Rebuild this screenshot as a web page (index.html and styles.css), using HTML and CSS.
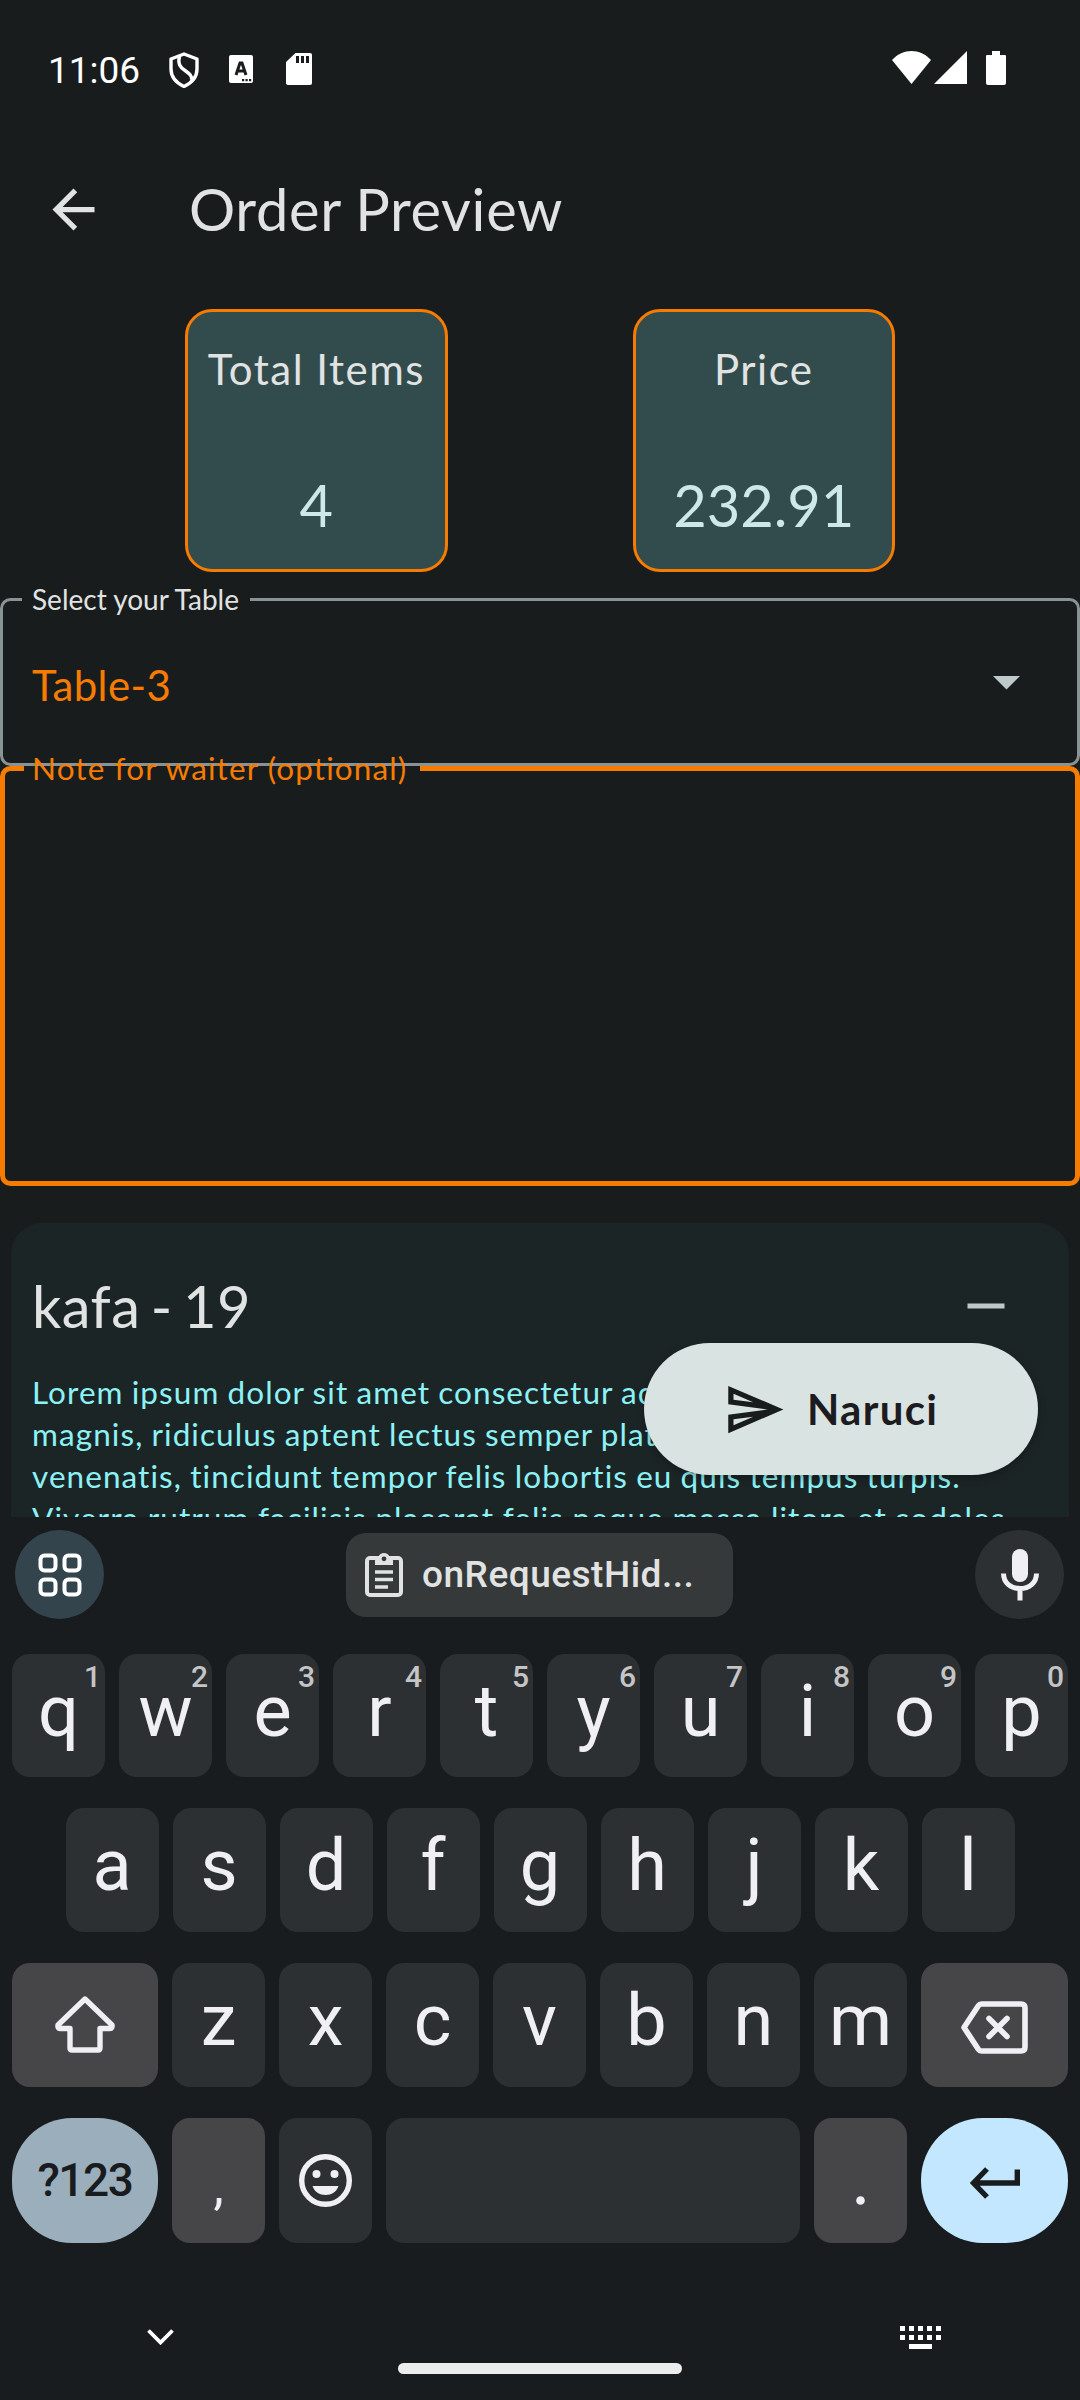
FILE: index.html
```html
<!DOCTYPE html>
<html lang="en">
<head>
<meta charset="utf-8">
<title>Order Preview</title>
<link rel="stylesheet" href="styles.css">
</head>
<body>
<div class="screen">
  <main class="app">
    <header class="status">
      <span class="clock">11:06</span>
      <svg class="ic-shield" width="30" height="36" viewBox="0 0 30 36" fill="none" stroke="#fff" stroke-width="3.4" stroke-linejoin="round"><path d="M15 2 L28 7 V17 C28 25 22.500 31 15 34.500 C7.500 31 2 25 2 17 V7 Z"/><path d="M10.500 4 C8.500 12 11 15 16 18.500 C20.500 21.700 23.500 24 22.500 28"/></svg>
      <svg class="ic-a" width="24" height="28" viewBox="0 0 24 28"><rect width="24" height="28" rx="2" fill="#fff"/><path d="M7 20 L11 8 H13 L17 20 M8.500 16 H15.500" fill="none" stroke="#191c1d" stroke-width="3"/><path d="M13 24h2.200v2.200H13zM16.500 24h2.200v2.200h-2.200zM20 24h2.200v2.200H20z" fill="#191c1d"/></svg>
      <svg class="ic-sd" width="26" height="32" viewBox="0 0 26 32"><path d="M9.500 0H24a2 2 0 0 1 2 2v28a2 2 0 0 1-2 2H2a2 2 0 0 1-2-2V9z" fill="#fff"/><path d="M10 3h3v7h-3zM15 3h3v7h-3zM20 3h3v7h-3z" fill="#191c1d"/></svg>
      <span class="spacer"></span>
      <svg class="ic-wifi" width="39" height="33" viewBox="0 0 39 33"><path d="M19.500 33 L0 9 C11 -3 28 -3 39 9 Z" fill="#fff"/></svg>
      <svg class="ic-cell" width="33" height="33" viewBox="0 0 33 33"><path d="M33 0V33H0z" fill="#fff"/></svg>
      <svg class="ic-batt" width="20" height="34" viewBox="0 0 20 34"><path d="M6 0h8v4h5a1 1 0 0 1 1 1v27a2 2 0 0 1-2 2H2a2 2 0 0 1-2-2V5a1 1 0 0 1 1-1h5z" fill="#fff"/></svg>
    </header>

    <div class="appbar">
      <svg width="63" height="63" viewBox="0 0 24 24"><path d="M20 11H7.830l5.590-5.590L12 4l-8 8 8 8 1.410-1.410L7.830 13H20z" fill="#e1e3e3"/></svg>
      <h1 class="title">Order Preview</h1>
    </div>

    <section class="stats">
      <div class="stat"><span class="stat-name">Total Items</span><span class="stat-value">4</span></div>
      <div class="stat"><span class="stat-name">Price</span><span class="stat-value">232.91</span></div>
    </section>

    <fieldset class="field select">
      <legend>Select your Table</legend>
      <span class="select-value">Table-3</span>
      <svg width="27" height="14" viewBox="0 0 27 14"><path d="M0 0H27L13.500 13.500z" fill="#bec9c9"/></svg>
    </fieldset>
    <fieldset class="field note"><legend>Note for waiter (optional)</legend></fieldset>

    <article class="item">
      <div class="item-head">
        <h2 class="item-title">kafa - 19</h2>
        <svg width="38" height="6" viewBox="0 0 38 6"><path d="M0.500 0.500H37.500V5.500H0.500z" fill="#bec9c9"/></svg>
      </div>
      <p class="item-text">Lorem ipsum dolor sit amet consectetur adipiscing elit<br>magnis, ridiculus aptent lectus semper platea<br>venenatis, tincidunt tempor felis lobortis eu quis tempus turpis.<br><span class="loose">Viverra rutrum facilisis placerat felis neque massa litora et sodales</span></p>
    </article>

    <div class="fab">
      <svg width="63" height="63" viewBox="0 0 24 24"><path d="M2.010 3L2 10l15 2-15 2 .010 7L23 12zM4 6.030l7.510 3.220L4 8.250zM11.500 14.750L4 17.970v-2.220z" fill="#191c1d" fill-rule="evenodd"/></svg>
      <span>Naruci</span>
    </div>
  </main>

  <section class="keyboard">
    <div class="strip">
      <div class="round apps"><svg width="44" height="44" viewBox="0 0 44 44" fill="none" stroke="#fff" stroke-width="4"><rect x="2.500" y="2.500" width="15" height="15" rx="4"/><rect x="26.500" y="2.500" width="15" height="15" rx="4"/><rect x="2.500" y="26.500" width="15" height="15" rx="4"/><rect x="26.500" y="26.500" width="15" height="15" rx="4"/></svg></div>
      <div class="chip">
        <svg width="38" height="45" viewBox="0 0 38 45"><rect x="2" y="6" width="34" height="37" rx="3" fill="none" stroke="#e1e3e3" stroke-width="4"/><path d="M10 4.500H13.500A6 6 0 0 1 24.500 4.500H28V13H10z" fill="#e1e3e3"/><circle cx="19" cy="6.800" r="2.400" fill="#363939"/><path d="M10 20H28M10 27.500H28M10 35H23" stroke="#e1e3e3" stroke-width="3.600"/></svg>
        <span>onRequestHid...</span>
      </div>
      <div class="round"><svg width="38" height="52" viewBox="0 0 38 52"><rect x="11" y="0" width="16" height="33" rx="8" fill="#f0eff3"/><path d="M2.500 24.500C2.500 34 10 39.500 19 39.500S35.500 34 35.500 24.500M19 39.500V51.500" fill="none" stroke="#f0eff3" stroke-width="5"/></svg></div>
    </div>

    <div class="row row-top">
      <div class="key">q<sup>1</sup></div><div class="key">w<sup>2</sup></div><div class="key">e<sup>3</sup></div><div class="key">r<sup>4</sup></div><div class="key">t<sup>5</sup></div><div class="key">y<sup>6</sup></div><div class="key">u<sup>7</sup></div><div class="key">i<sup>8</sup></div><div class="key">o<sup>9</sup></div><div class="key">p<sup>0</sup></div>
    </div>
    <div class="row row-home">
      <div class="key">a</div><div class="key">s</div><div class="key">d</div><div class="key">f</div><div class="key">g</div><div class="key">h</div><div class="key">j</div><div class="key">k</div><div class="key">l</div>
    </div>
    <div class="row">
      <div class="key wide dim"><svg class="ic-shift" width="60" height="58" viewBox="0 0 60 58" fill="none" stroke="#f0eff3" stroke-width="5.400" stroke-linejoin="round"><path d="M30 4 L57 30 Q57.500 33.500 55 33.500 H45 V53 Q45 55 43 55 H17 Q15 55 15 53 V33.500 H5 Q2.500 33.500 3 30 Z"/></svg></div>
      <div class="key">z</div><div class="key">x</div><div class="key">c</div><div class="key">v</div><div class="key">b</div><div class="key">n</div><div class="key">m</div>
      <div class="key wide dim"><svg class="ic-del" width="67" height="53" viewBox="0 0 67 53" fill="none" stroke="#f0eff3" stroke-width="5.600" stroke-linejoin="round" stroke-linecap="round"><path d="M3 26.500 L17.500 4.500 Q18.500 3 20.500 3 H60 Q64 3 64 7 V46 Q64 50 60 50 H20.500 Q18.500 50 17.500 48.500 Z"/><path d="M28 17.500L46 35.500M46 17.500L28 35.500"/></svg></div>
    </div>
    <div class="row row-last">
      <div class="key wide mode">?123</div>
      <div class="key dim punct">,</div>
      <div class="key"><svg class="ic-smile" width="53" height="53" viewBox="0 0 53 53"><circle cx="26.500" cy="26.500" r="23.800" fill="none" stroke="#f0eff3" stroke-width="5.400"/><circle cx="17.500" cy="20" r="4" fill="#f0eff3"/><circle cx="35.500" cy="20" r="4" fill="#f0eff3"/><path d="M13.500 32H39.500C37.500 38 32.500 41 26.500 41S15.500 38 13.500 32z" fill="#f0eff3"/></svg></div>
      <div class="key space"></div>
      <div class="key dim"><svg class="ic-dot" width="9" height="9" viewBox="0 0 9 9"><circle cx="4.500" cy="4.500" r="4.300" fill="#f0eff3"/></svg></div>
      <div class="key wide enter"><svg width="50" height="32" viewBox="0 0 50 32" fill="none" stroke="#191c1f" stroke-width="5.400"><path d="M47.300 2.500V16H5M17 2L3.500 16L17 30"/></svg></div>
    </div>

    <footer class="nav">
      <svg class="ic-down" width="27" height="16" viewBox="0 0 27 16"><path d="M1.500 1.500L13.500 13.500L25.500 1.500" fill="none" stroke="#fff" stroke-width="3.800"/></svg>
      <span class="handle"></span>
      <svg class="ic-kb" width="41" height="23" viewBox="0 0 41 23"><path d="M0 0h5v5H0zM9 0h5v5H9zM18 0h5v5h-5zM27 0h5v5h-5zM36 0h5v5h-5zM0 9h5v5H0zM9 9h5v5H9zM18 9h5v5h-5zM27 9h5v5h-5zM36 9h5v5h-5zM9 18h23v5H9z" fill="#fff"/></svg>
    </footer>
  </section>
</div>
</body>
</html>
```
FILE: styles.css
```css
* { box-sizing: border-box; }
body { margin: 0; background: #191c1d; }
svg { display: block; flex: none; }
.screen { width: 1080px; height: 2400px; overflow: hidden; }

.app {
  position: relative;
  height: 1517px;
  overflow: hidden;
  background: #191c1d;
  color: #e1e3e3;
  font-family: Lato, sans-serif;
}

/* status bar */
.status { display: flex; align-items: flex-start; height: 136px; padding: 51px 74px 0 48px; }
.clock { width: 121px; margin-top: -1px; font: 37px/42px Roboto, sans-serif; color: #fff; }
.ic-shield { margin-top: 1px; }
.ic-a { margin: 4px 0 0 30px; }
.ic-sd { margin: 2px 0 0 33px; }
.spacer { flex: 1; }
.ic-cell { margin: 0 19px 0 3px; }

.appbar { display: flex; align-items: center; height: 147px; padding-left: 42px; }
.title { margin: 0 0 2px 84px; font-size: 57.75px; line-height: 70px; font-weight: 400; letter-spacing: .7px; word-spacing: -1px; }

/* summary cards */
.stats { display: flex; justify-content: center; gap: 185px; margin-top: 26px; }
.stat {
  display: flex; flex-direction: column; align-items: center; justify-content: space-between;
  width: 262.5px; height: 262.5px; padding: 32px 0 29px;
  border: 3px solid #f67c00; border-radius: 27px; background: #324b4c;
}
.stat-name { font-size: 42px; line-height: 50px; letter-spacing: 1.5px; white-space: nowrap; }
.stat-value { font-size: 57.75px; line-height: 70px; color: #cce8e8; }

/* outlined fields */
.field { margin: 0; min-width: 0; border-radius: 10.5px; }
.field legend { white-space: nowrap; }
.select {
  display: flex; align-items: flex-start; justify-content: space-between;
  height: 182px; margin-top: 12px; padding: 45px 57px 0 19px; border: 3px solid #899393;
}
.select legend { padding: 0 11px 0 10px; font-size: 28px; line-height: 31px; }
.select-value { padding-left: 10px; font-size: 42px; line-height: 50px; letter-spacing: .4px; color: #f67c00; }
.select svg { margin-top: 16px; }
.note { height: 436px; margin-top: -16px; padding: 0 19px; border: 5px solid #f67c00; }
.note legend { padding: 0 13px 2px 8px; font-size: 31.5px; line-height: 36px; letter-spacing: 1.1px; color: #f67c00; }

/* order item */
.item { height: 420px; margin: 37px 11px 0; padding: 48px 21px 0; border-radius: 31.5px; background: #1c2526; }
.item-head { display: flex; align-items: center; justify-content: space-between; padding-right: 43px; }
.item-title { margin: 0; font-size: 57.75px; line-height: 70px; font-weight: 400; letter-spacing: .5px; word-spacing: -5px; }
.item-text { margin: 30px 0 0; font-size: 31.5px; line-height: 42px; letter-spacing: 1.07px; word-spacing: -1px; color: #8cf2f5; white-space: nowrap; }
.loose { word-spacing: -.5px; }

.fab {
  position: absolute; left: 644px; top: 1343px;
  display: flex; align-items: center; gap: 21px;
  width: 394px; height: 132px; padding-left: 79px; border-radius: 66px;
  background: #d9e3e1; color: #1c1b1f; box-shadow: 0 3px 8px rgba(0, 0, 0, .3);
  font-size: 42px; font-weight: 700; letter-spacing: 1.3px;
}

/* keyboard */
.keyboard { height: 883px; padding: 13px 12px 0; background: #191c1f; font-family: Roboto, sans-serif; color: #f0eff3; }
.strip { display: flex; align-items: center; justify-content: space-between; height: 89px; padding: 0 4px 0 3px; margin-bottom: 35px; }
.round { display: flex; align-items: center; justify-content: center; width: 89px; height: 89px; border-radius: 50%; background: #2d3033; }
.apps { background: #33444d; }
.chip { display: flex; align-items: center; gap: 19px; width: 387px; height: 84px; padding-left: 19px; border-radius: 20px; background: #363939; font-size: 37px; font-weight: 500; letter-spacing: .5px; color: #e1e3e3; }

.row { display: flex; gap: 14px; height: 124px; margin-bottom: 31px; }
.row-top { height: 123px; }
.row-home { padding-left: 53.5px; }
.row-last { height: 125px; }
.key {
  position: relative; display: flex; justify-content: center;
  width: 93px; flex: none; border-radius: 18px; background: #2d3033;
  font-size: 72px; line-height: 115px;
}
.key sup { position: absolute; right: 4px; top: 6px; font-size: 30px; line-height: 34px; font-weight: 500; color: #c5c5c7; }
.key svg { margin: auto; }
.wide { width: 146px; }
.row .wide:last-child { width: 147px; }
.dim { background: #464648; }
.mode { border-radius: 60px; background: #9baebc; color: #191c1f; font-size: 46px; font-weight: 500; line-height: 124px; letter-spacing: -1.4px; }
.punct { font-size: 52px; line-height: 138px; }
.space { width: 414px; }
.enter { border-radius: 62px; background: #c2e7ff; }
.key .ic-shift { margin-top: 32px; }
.key .ic-del { margin-top: 38px; }
.key .ic-smile { margin-top: 36px; }
.key .ic-dot { margin-top: 78px; }
.enter svg { position: relative; top: 2px; }

.nav { display: flex; align-items: flex-start; justify-content: space-between; padding: 53px 127px 0 135px; }
.ic-down { margin-top: 2px; }
.handle { width: 284px; height: 11px; margin: 36px -6px 0 0; border-radius: 6px; background: #ececec; }
.ic-kb { margin-top: -1px; }
```
